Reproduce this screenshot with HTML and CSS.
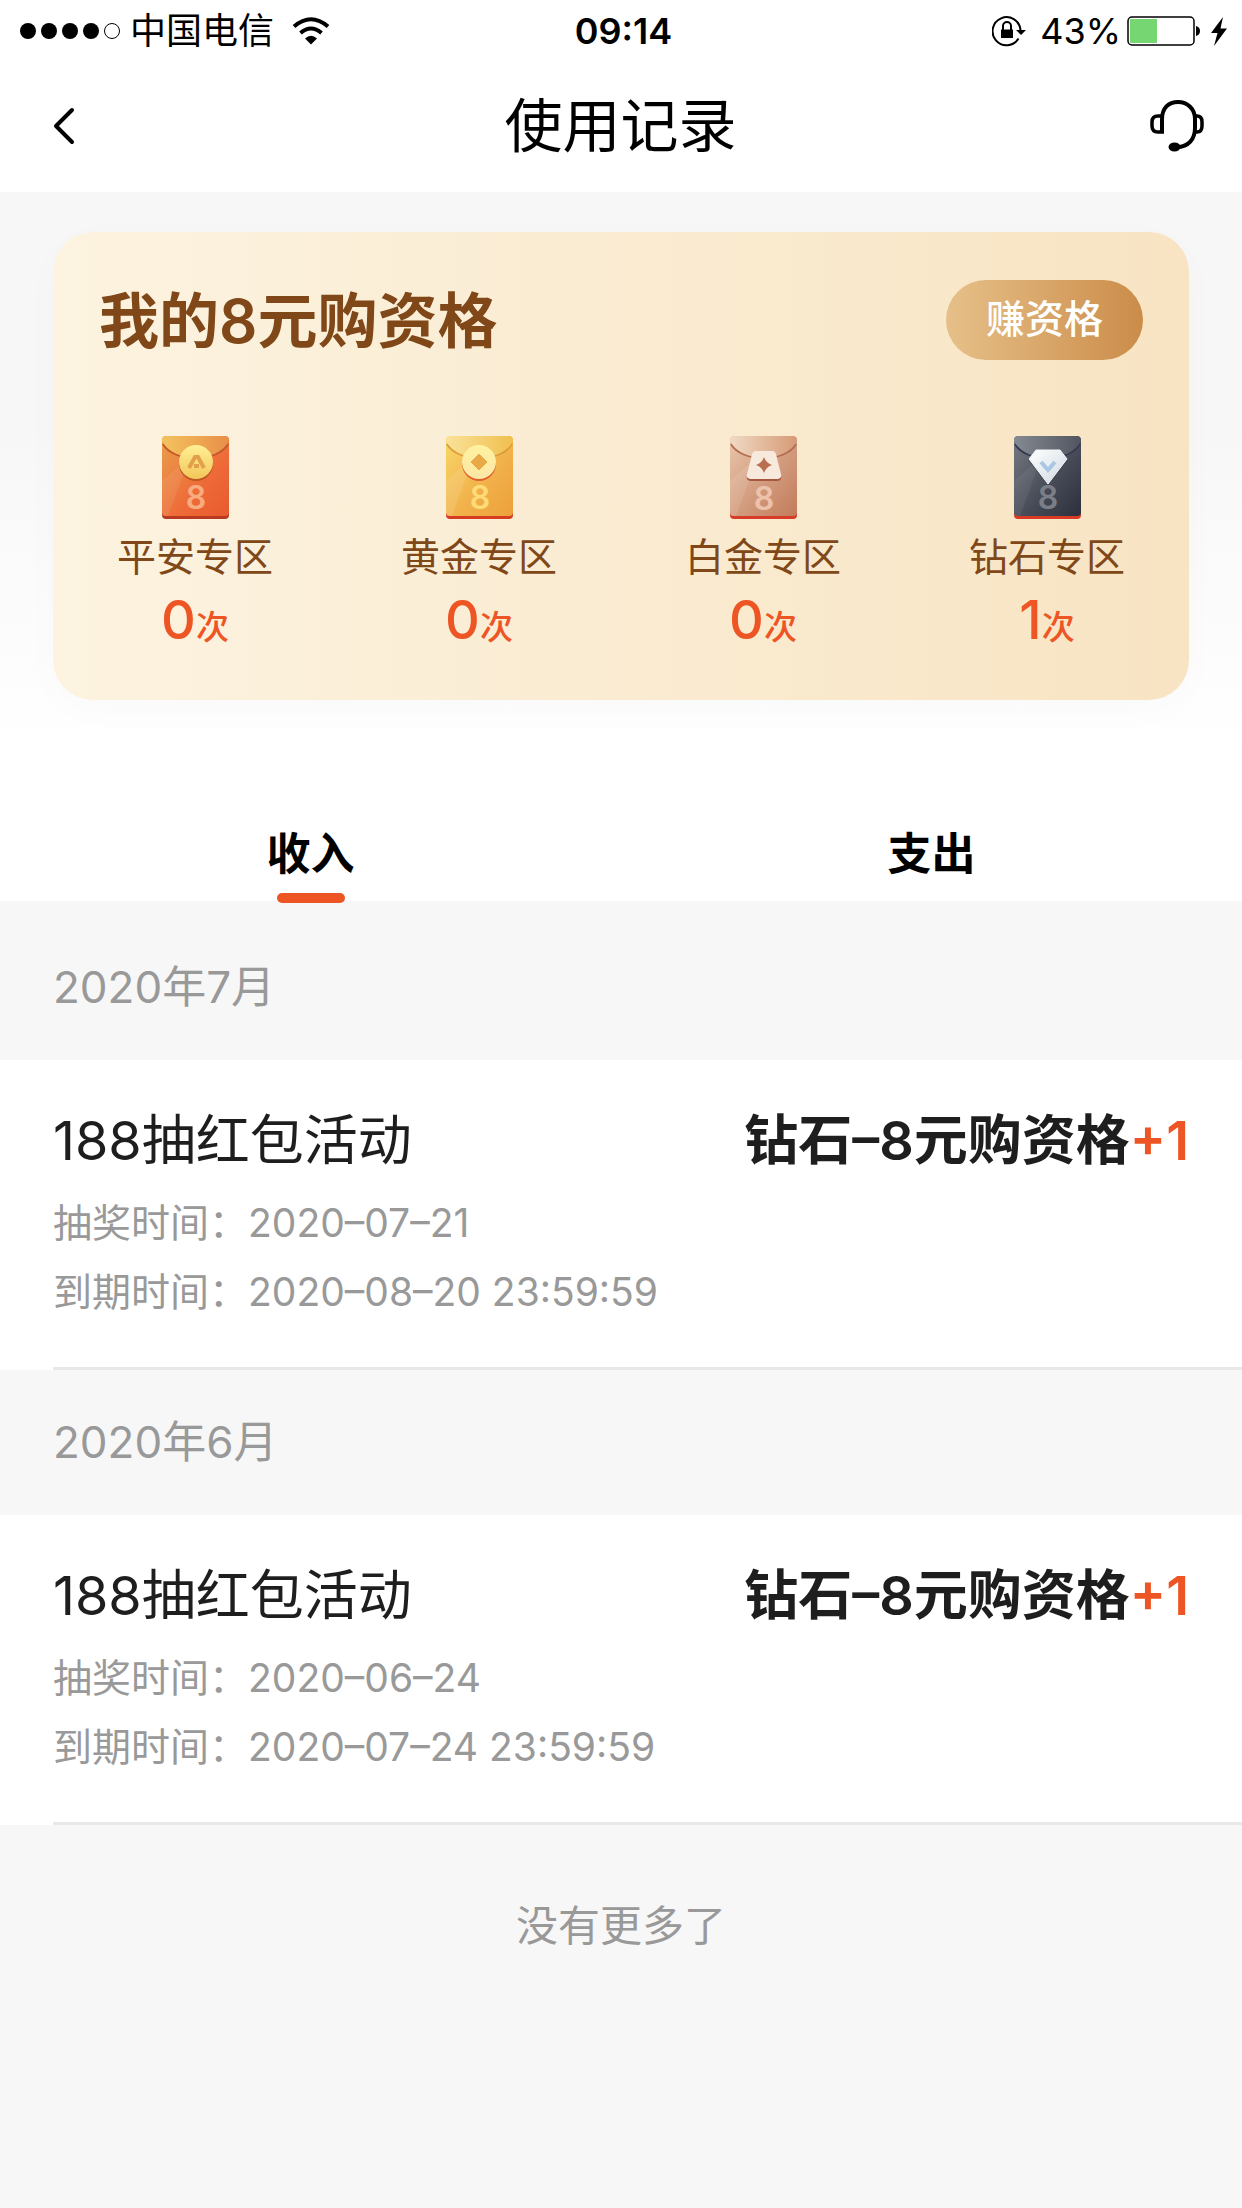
FILE: index.html
```html
<!DOCTYPE html>
<html lang="zh-CN">
<head>
  <meta charset="utf-8"/>
  <meta name="viewport" content="width=device-width, initial-scale=1.0"/>
  <title>使用记录</title>
  <link rel="stylesheet" href="styles.css">
</head>
<body>
  <div class="status-bar">
    <div class="status-left">
      <div class="signal"><i></i><i></i><i></i><i></i><i class="off"></i></div>
      <span>中国电信</span>
      <svg class="wifi" width="38" height="28" viewBox="0 0 38 28">
        <path d="M2 9.500Q19-5 36 9.500" fill="none" stroke="#000" stroke-width="4"/>
        <path d="M8.500 16Q19 7 29.500 16" fill="none" stroke="#000" stroke-width="4"/>
        <path d="M13 21.500Q19 16 25 21.500L19 27.500z"/>
      </svg>
    </div>
    <span class="clock">09:14</span>
    <div class="status-right">
      <svg class="lock" width="36" height="32" viewBox="0 0 36 32">
        <path d="M28.500 15A14 14 0 1 0 26.500 23.500" fill="none" stroke="#000" stroke-width="2"/>
        <path d="M24 15h10l-5 5z"/>
        <path d="M9 14.500h12V23H9z"/>
        <path d="M11 15v-4a4 4 0 0 1 8 0v4" fill="none" stroke="#000" stroke-width="2"/>
      </svg>
      <span>43%</span>
      <svg class="battery" width="74" height="30" viewBox="0 0 74 30">
        <rect x="1" y="1" width="66" height="28" rx="4" fill="#fff" stroke="#000" stroke-width="1.500"/>
        <path d="M3 3h27v24H3z" fill="#76d672"/>
        <path d="M69 10q4 1 4 5t-4 5z"/>
      </svg>
      <svg width="16" height="29" viewBox="0 0 16 29"><path d="M12 0L0 16h6.500L3 29 16 11.500H9.500z"/></svg>
    </div>
  </div>

  <nav class="navbar">
    <a class="back" href="#" aria-label="返回">
      <svg width="22" height="38" viewBox="0 0 22 38"><path d="M19 3L3 19l16 16" fill="none" stroke="#000" stroke-width="4" stroke-linecap="round" stroke-linejoin="round"/></svg>
    </a>
    <h1>使用记录</h1>
    <a class="service" href="#" aria-label="客服">
      <svg width="54" height="54" viewBox="0 0 54 54" fill="none" stroke="#000" stroke-width="4">
        <path d="M12 33V20.500C12 9 18.500 3 28 3s17 7 17 17v9c0 11-6.500 19-18 19h-3"/>
        <path d="M12 17H8q-6 0-6 6v4q0 6 6 6h6" stroke-width="3.500"/>
        <path d="M45 17h2q5 0 5 6v4q0 6-5 6h-3" stroke-width="3.500"/>
        <ellipse cx="24.500" cy="48" rx="6" ry="4.500" fill="#000" stroke="none"/>
      </svg>
    </a>
  </nav>

  <section class="summary">
    <div class="card">
      <div class="card-head">
        <h2>我的8元购资格</h2>
        <button type="button">赚资格</button>
      </div>
      <div class="zones">
        <div class="zone">
          <svg width="67" height="83" viewBox="0 0 67 83">
            <defs>
              <linearGradient id="red" x1="0" y1="0" x2="1" y2="1"><stop offset="0" stop-color="#e9a04c"/><stop offset=".6" stop-color="#ee6b38"/><stop offset="1" stop-color="#e85a2e"/></linearGradient>
              <linearGradient id="redFlap" x1="0" y1="0" x2="1" y2="0"><stop offset="0" stop-color="#f3c35e"/><stop offset="1" stop-color="#e88f48"/></linearGradient>
              <linearGradient id="coin" x1="0" y1="0" x2="0" y2="1"><stop offset="0" stop-color="#fff095"/><stop offset="1" stop-color="#f3c65a"/></linearGradient>
            </defs>
            <rect y="6" width="67" height="77" rx="4" fill="#b93a20"/>
            <rect width="67" height="80" rx="4" fill="url(#red)"/>
            <path d="M0 80V45L28 20 6 80z" fill="#fff" opacity=".08"/>
            <path d="M1 8C12 27 55 27 66 8" fill="none" stroke="#c5562b" stroke-width="2"/>
            <path d="M0 5q0-5 5-5h57q5 0 5 5C56 27 11 27 0 5z" fill="url(#redFlap)"/>
            <circle cx="34" cy="28" r="17" fill="#bd5424"/>
            <circle cx="34" cy="26" r="17" fill="url(#coin)"/>
            <path d="M27 32l6-11h3l6 11" fill="none" stroke="#e2a04d" stroke-width="4"/>
            <path d="M32 28h5v4h-5z" fill="#e2a04d"/>
            <text x="34" y="73" class="eight" fill="#f9ab80">8</text>
          </svg>
          <p>平安专区</p>
          <div class="count">0<small>次</small></div>
        </div>
        <div class="zone">
          <svg width="67" height="83" viewBox="0 0 67 83">
            <defs>
              <linearGradient id="gold" x1="0" y1="0" x2="1" y2="1"><stop offset="0" stop-color="#f8d768"/><stop offset=".6" stop-color="#f1b04a"/><stop offset="1" stop-color="#eda03b"/></linearGradient>
              <linearGradient id="goldFlap" x1="0" y1="0" x2="1" y2="0"><stop offset="0" stop-color="#fae29a"/><stop offset="1" stop-color="#f0bf4f"/></linearGradient>
              <linearGradient id="paleCoin" x1="0" y1="0" x2="0" y2="1"><stop offset="0" stop-color="#fff29f"/><stop offset="1" stop-color="#fde6a6"/></linearGradient>
            </defs>
            <rect y="6" width="67" height="77" rx="4" fill="#d53c22"/>
            <rect width="67" height="80" rx="4" fill="url(#gold)"/>
            <path d="M0 80V45L28 20 6 80z" fill="#fff" opacity=".1"/>
            <path d="M1 8C12 27 55 27 66 8" fill="none" stroke="#dc9e3c" stroke-width="2"/>
            <path d="M0 5q0-5 5-5h57q5 0 5 5C56 27 11 27 0 5z" fill="url(#goldFlap)"/>
            <circle cx="33" cy="28" r="17" fill="#e2602c"/>
            <circle cx="33" cy="26" r="17" fill="url(#paleCoin)"/>
            <path d="M33 18l8 8-8 8-8-8z" fill="#eaa947" stroke="#eaa947" stroke-linejoin="round"/>
            <text x="34" y="73" class="eight" fill="#fddc78">8</text>
          </svg>
          <p>黄金专区</p>
          <div class="count">0<small>次</small></div>
        </div>
        <div class="zone">
          <svg width="67" height="83" viewBox="0 0 67 83">
            <defs>
              <linearGradient id="rose" x1="0" y1="0" x2="1" y2="1"><stop offset="0" stop-color="#e9c6ab"/><stop offset=".6" stop-color="#d09779"/><stop offset="1" stop-color="#c27c5b"/></linearGradient>
              <linearGradient id="roseFlap" x1="0" y1="0" x2="1" y2="0"><stop offset="0" stop-color="#f0dac4"/><stop offset="1" stop-color="#d69a76"/></linearGradient>
            </defs>
            <rect y="6" width="67" height="77" rx="4" fill="#d83c29"/>
            <rect width="67" height="80" rx="4" fill="url(#rose)"/>
            <path d="M0 80V45L28 20 6 80z" fill="#fff" opacity=".1"/>
            <path d="M1 8C12 27 55 27 66 8" fill="none" stroke="#b26d51" stroke-width="2"/>
            <path d="M0 5q0-5 5-5h57q5 0 5 5C56 27 11 27 0 5z" fill="url(#roseFlap)"/>
            <path d="M22 19q1-3 4-3h16q3 0 4 3l5 21q1 5-4 5H21q-5 0-4-5z" fill="#a5583f"/>
            <path d="M22 18q1-3 4-3h16q3 0 4 3l5 20q1 5-4 5H21q-5 0-4-5z" fill="#f7eadd"/>
            <path d="M34 21q2 6 8 8-6 2-8 8-2-6-8-8 6-2 8-8z" fill="#b76f50"/>
            <text x="34" y="74" class="eight" fill="#edc2ac">8</text>
          </svg>
          <p>白金专区</p>
          <div class="count">0<small>次</small></div>
        </div>
        <div class="zone">
          <svg width="67" height="83" viewBox="0 0 67 83">
            <defs>
              <linearGradient id="dark" x1="0" y1="0" x2="1" y2="1"><stop offset="0" stop-color="#767b83"/><stop offset=".6" stop-color="#454955"/><stop offset="1" stop-color="#2b303c"/></linearGradient>
              <linearGradient id="darkFlap" x1="0" y1="0" x2="1" y2="0"><stop offset="0" stop-color="#858b92"/><stop offset="1" stop-color="#515560"/></linearGradient>
              <linearGradient id="gem" x1="0" y1="0" x2="1" y2="1"><stop offset="0" stop-color="#fff"/><stop offset="1" stop-color="#cfd9e2"/></linearGradient>
            </defs>
            <rect y="6" width="67" height="77" rx="4" fill="#d93a26"/>
            <rect width="67" height="80" rx="4" fill="url(#dark)"/>
            <path d="M0 80V45L28 20 6 80z" fill="#fff" opacity=".06"/>
            <path d="M1 8C12 27 55 27 66 8" fill="none" stroke="#363a52" stroke-width="2"/>
            <path d="M0 5q0-5 5-5h57q5 0 5 5C56 27 11 27 0 5z" fill="url(#darkFlap)"/>
            <path d="M22 15h24l8 9-20 25-20-25z" fill="#353944" opacity=".6"/>
            <path d="M22 14h24l7 9-19 25-19-25z" fill="url(#gem)" stroke="#f3f6f8" stroke-linejoin="round"/>
            <path d="M27 26l7 8 7-8" fill="none" stroke="#a9c6e3" stroke-width="4"/>
            <text x="34" y="73" class="eight" fill="#7b7e88">8</text>
          </svg>
          <p>钻石专区</p>
          <div class="count">1<small>次</small></div>
        </div>
      </div>
    </div>
  </section>

  <div class="tabs">
    <button type="button" class="active">收入</button>
    <button type="button">支出</button>
  </div>

  <main class="records">
    <h3>2020年7月</h3>
    <article>
      <div class="record-title"><span>188抽红包活动</span><strong>钻石–8元购资格<em>+1</em></strong></div>
      <p>抽奖时间：2020–07–21</p>
      <p>到期时间：2020–08–20 23:59:59</p>
    </article>
    <h3>2020年6月</h3>
    <article>
      <div class="record-title"><span>188抽红包活动</span><strong>钻石–8元购资格<em>+1</em></strong></div>
      <p>抽奖时间：2020–06–24</p>
      <p>到期时间：2020–07–24 23:59:59</p>
    </article>
    <div class="no-more">没有更多了</div>
  </main>
</body>
</html>
```
FILE: styles.css
```css
* { box-sizing:border-box; }
body { margin:0; background:#f7f7f7; color:#1e1e1e; font-family:Inter, "Noto Sans CJK SC", sans-serif; }
h1, h2, h3, p { margin:0; }
svg { display:block; }
button { border:none; background:none; padding:0; font-family:inherit; cursor:pointer; }

.status-bar { display:grid; grid-template-columns:1fr auto 1fr; align-items:center; height:60px; padding:2px 15px 0 20px; background:#fff; color:#000; font-size:36px; line-height:58px; }
.status-left, .status-right { display:flex; align-items:center; }
.status-right { justify-content:flex-end; }
.signal { display:flex; gap:5px; margin-right:10px; }
.signal i { width:16px; height:16px; border-radius:50%; background:#000; }
.signal .off { background:#fff; border:1px solid #000; }
.wifi { margin-left:18px; }
.clock { font-weight:600; }
.lock { margin-right:12px; }
.battery { margin:0 10px 0 6px; }

.navbar { display:flex; align-items:center; height:132px; padding:0 38px 0 53px; background:#fff; color:#000; }
.navbar h1 { flex:1; font-size:58px; line-height:84px; font-weight:400; text-align:center; }
.back { width:38px; }

.summary { padding:40px 53px 80px; background:linear-gradient(#f7f7f7 40%, #fff 95%); }
.card { padding:48px 0 45px; border-radius:40px; background:linear-gradient(90deg, #fcf3e0, #f8e4c3); box-shadow:0 10px 40px rgba(0,0,0,.02); }
.card-head { display:flex; justify-content:space-between; align-items:center; height:80px; padding:0 46px; }
.card-head h2 { padding-top:2px; color:#804818; font-size:60px; line-height:80px; font-weight:600; }
.card-head button { width:197px; height:80px; padding-bottom:8px; border-radius:40px; background:linear-gradient(90deg, #e6c089, #cb8c49); color:#fff; font-size:39px; font-weight:500; }
.zones { display:grid; grid-template-columns:repeat(4, 1fr); margin-top:76px; }
.zone { display:flex; flex-direction:column; align-items:center; }
.zone p { margin-top:10px; color:#804818; font-size:39px; line-height:56px; }
.eight { font-family:Inter, sans-serif; font-size:32px; font-weight:600; text-anchor:middle; }
.count { color:#ee5524; font-size:54px; line-height:70px; font-weight:500; }
.count small { font-size:33px; line-height:1; }

.tabs { display:grid; grid-template-columns:1fr 1fr; height:121px; background:#fff; }
.tabs button { position:relative; color:#000; font-size:44px; line-height:60px; font-weight:600; padding-top:26px; }
.tabs .active::after { content:""; position:absolute; left:50%; bottom:-2px; width:68px; height:10px; margin-left:-34px; border-radius:5px; background:#ee5524; }

.records { padding-top:14px; }
.records h3 { padding:0 53px 1px; color:#999; font-size:44px; line-height:144px; font-weight:400; }
.records article { position:relative; padding:42px 53px 44px; background:#fff; }
.records article::after { content:""; position:absolute; left:53px; right:0; bottom:0; height:3px; background:#e8e8ea; }
.record-title { display:flex; justify-content:space-between; margin-bottom:8px; font-size:54px; line-height:78px; }
.record-title strong { font-weight:600; }
.record-title em { color:#ee5524; font-style:normal; }
.records p { color:#999; font-size:39px; line-height:69px; }
.no-more { padding:68px 0; color:#999; font-size:42px; line-height:66px; text-align:center; }
```
